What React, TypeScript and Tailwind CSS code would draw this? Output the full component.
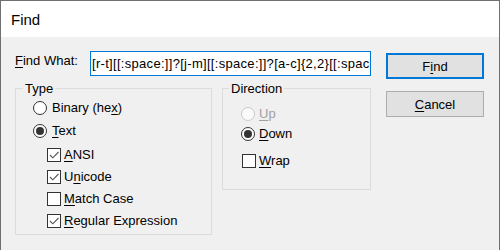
import React from "react";

function Radio({ checked, disabled }: { checked?: boolean; disabled?: boolean }) {
  return (
    <div
      className={
        "w-[14px] h-[14px] rounded-full border flex items-center justify-center shrink-0 " +
        (disabled ? "border-[#c8c8c8] bg-[#fafafa]" : "border-[#333333] bg-white")
      }
    >
      {checked && <div className="w-[8px] h-[8px] rounded-full bg-[#333333]" />}
    </div>
  );
}

function Check({ checked }: { checked?: boolean }) {
  return (
    <div className="w-[14px] h-[14px] border border-[#333333] bg-white shrink-0 flex items-center justify-center">
      {checked && (
        <svg width="12" height="12" viewBox="0 0 12 12">
          <polyline points="2,6 4.8,8.8 10.5,3" fill="none" stroke="#555555" strokeWidth="1.1" />
        </svg>
      )}
    </div>
  );
}

function U({ children }: { children: React.ReactNode }) {
  return <span className="underline underline-offset-[2px]">{children}</span>;
}

export default function App() {
  return (
    <div className="w-[500px] h-[250px] overflow-hidden border-x border-t border-[#6f6f6f] bg-[#f0f0f0] flex flex-col font-['Liberation_Sans',Arial,sans-serif] text-[13px] leading-[15px] text-black">
      <div className="h-[36px] shrink-0 bg-white flex items-center pl-[10px] text-[15px]">Find</div>
      <div className="flex pl-[14px] pt-[14px]">
        <div className="w-[356px] flex flex-col">
          <div className="flex items-start">
            <div className="w-[75px] mt-[2px] whitespace-nowrap">
              <U>F</U>ind What:
            </div>
            <div className="w-[281px] h-[25px] border border-[#0078d7] bg-white pl-[1px] flex items-center overflow-hidden whitespace-nowrap tracking-[0.3px]">
              [r-t][[:space:]]?[j-m][[:space:]]?[a-c]{"{2,2}"}[[:space:]]
            </div>
          </div>
          <div className="flex items-start gap-[10px] mt-[12px]">
            <div className="relative w-[197px] h-[147px] border border-[#dcdcdc] flex flex-col pl-[17px] pt-[11px]">
              <div className="absolute left-[7px] top-[-8px] px-[2px] bg-[#f0f0f0]">Type</div>
              <div className="flex items-center gap-[5px]">
                <Radio />
                <span>
                  Binary (he<U>x</U>)
                </span>
              </div>
              <div className="flex items-center gap-[5px] mt-[8px]">
                <Radio checked />
                <span>
                  <U>T</U>ext
                </span>
              </div>
              <div className="flex items-center gap-[3px] mt-[9px] ml-[14px]">
                <Check checked />
                <span>
                  <U>A</U>NSI
                </span>
              </div>
              <div className="flex items-center gap-[3px] mt-[7px] ml-[14px]">
                <Check checked />
                <span>
                  U<U>n</U>icode
                </span>
              </div>
              <div className="flex items-center gap-[3px] mt-[7px] ml-[14px]">
                <Check />
                <span>
                  <U>M</U>atch Case
                </span>
              </div>
              <div className="flex items-center gap-[3px] mt-[7px] ml-[14px]">
                <Check checked />
                <span>
                  <U>R</U>egular Expression
                </span>
              </div>
            </div>
            <div className="relative w-[149px] h-[102px] border border-[#dcdcdc] flex flex-col pl-[18px] pt-[17px]">
              <div className="absolute left-[6px] top-[-8px] px-[2px] bg-[#f0f0f0]">Direction</div>
              <div className="flex items-center gap-[4px] text-[#a0a0a0]">
                <Radio disabled />
                <span>
                  <U>U</U>p
                </span>
              </div>
              <div className="flex items-center gap-[4px] mt-[5px]">
                <Radio checked />
                <span>
                  <U>D</U>own
                </span>
              </div>
              <div className="flex items-center gap-[3px] mt-[12px] ml-[1px]">
                <Check />
                <span>
                  <U>W</U>rap
                </span>
              </div>
            </div>
          </div>
        </div>
        <div className="ml-[15px] pt-[2px] flex flex-col">
          <div className="w-[98px] h-[26px] border-2 border-[#0078d7] bg-[#e1e1e1] flex items-center justify-center">
            <span>
              F<U>i</U>nd
            </span>
          </div>
          <div className="w-[98px] h-[26px] mt-[12px] border border-[#adadad] bg-[#e1e1e1] flex items-center justify-center">
            <span>
              <U>C</U>ancel
            </span>
          </div>
        </div>
      </div>
    </div>
  );
}
